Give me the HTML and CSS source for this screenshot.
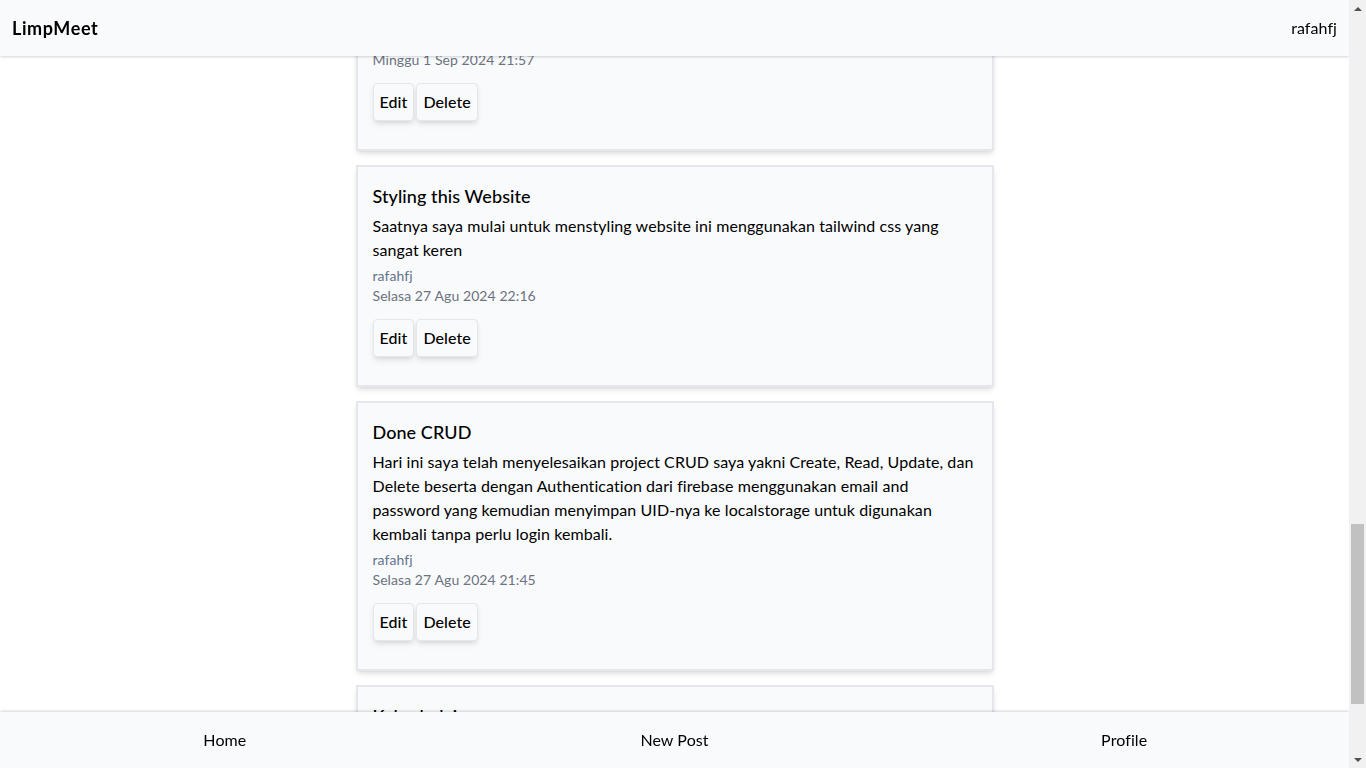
FILE: index.html
```html
<!DOCTYPE html>
<html lang="id">
<head>
<meta charset="utf-8">
<title>LimpMeet</title>
<link rel="stylesheet" href="styles.css">
</head>
<body>
<header class="topbar">
  <div class="brand">LimpMeet</div>
  <div class="user">rafahfj</div>
</header>

<main class="feed">
  <article class="card">
    <h2 class="card-title">Halaman Profile</h2>
    <p class="card-body">Hari ini saya menambahkan halaman profile yang menampilkan semua postingan milik pengguna yang sedang login.</p>
    <div class="card-author">rafahfj</div>
    <div class="card-date">Senin 9 Sep 2024 20:11</div>
    <div class="actions"><button class="btn">Edit</button><button class="btn">Delete</button></div>
  </article>
  <article class="card">
    <h2 class="card-title">Navigasi Bawah</h2>
    <p class="card-body">Menambahkan navigasi di bagian bawah layar agar lebih mudah diakses dari perangkat mobile.</p>
    <div class="card-author">rafahfj</div>
    <div class="card-date">Minggu 8 Sep 2024 19:40</div>
    <div class="actions"><button class="btn">Edit</button><button class="btn">Delete</button></div>
  </article>
  <article class="card">
    <h2 class="card-title">Format Tanggal</h2>
    <p class="card-body">Tanggal postingan sekarang ditampilkan dalam bahasa Indonesia lengkap dengan nama hari, tanggal, bulan, tahun dan jam ketika postingan tersebut dibuat.</p>
    <div class="card-author">rafahfj</div>
    <div class="card-date">Sabtu 7 Sep 2024 10:05</div>
    <div class="actions"><button class="btn">Edit</button><button class="btn">Delete</button></div>
  </article>
  <article class="card">
    <h2 class="card-title">Memperbaiki Bug Login</h2>
    <p class="card-body">Ternyata masih ada bug ketika pengguna logout lalu login kembali dengan akun yang berbeda, UID lama masih tersimpan di localstorage. Sekarang UID dihapus setiap kali pengguna logout sehingga data yang tampil selalu sesuai dengan akun yang sedang login.</p>
    <div class="card-author">rafahfj</div>
    <div class="card-date">Kamis 5 Sep 2024 22:30</div>
    <div class="actions"><button class="btn">Edit</button><button class="btn">Delete</button></div>
  </article>
  <article class="card">
    <h2 class="card-title">Halaman New Post</h2>
    <p class="card-body">Membuat halaman khusus untuk menulis postingan baru dengan judul dan isi.</p>
    <div class="card-author">rafahfj</div>
    <div class="card-date">Rabu 4 Sep 2024 21:12</div>
    <div class="actions"><button class="btn">Edit</button><button class="btn">Delete</button></div>
  </article>
  <article class="card">
    <h2 class="card-title">Konfirmasi Hapus</h2>
    <p class="card-body">Sebelum postingan dihapus sekarang akan muncul konfirmasi terlebih dahulu supaya tidak terhapus secara tidak sengaja oleh pengguna.</p>
    <div class="card-author">rafahfj</div>
    <div class="card-date">Selasa 3 Sep 2024 20:48</div>
    <div class="actions"><button class="btn">Edit</button><button class="btn">Delete</button></div>
  </article>
  <article class="card">
    <h2 class="card-title">Urutan Postingan</h2>
    <p class="card-body">Postingan sekarang diurutkan dari yang paling baru sampai yang paling lama.</p>
    <div class="card-author">rafahfj</div>
    <div class="card-date">Senin 2 Sep 2024 19:15</div>
    <div class="actions"><button class="btn">Edit</button><button class="btn">Delete</button></div>
  </article>
  <article class="card">
    <h2 class="card-title">Nama Website</h2>
    <p class="card-body">Akhirnya saya memberi nama website ini LimpMeet, tempat untuk berbagi catatan harian.</p>
    <div class="card-author">rafahfj</div>
    <div class="card-date">Senin 2 Sep 2024 08:20</div>
    <div class="actions"><button class="btn">Edit</button><button class="btn">Delete</button></div>
  </article>
  <article class="card">
    <h2 class="card-title">Responsive Layout</h2>
    <p class="card-body">Mengatur tampilan supaya tetap rapi ketika dibuka di layar kecil maupun layar besar.</p>
    <div class="card-author">rafahfj</div>
    <div class="card-date">Minggu 1 Sep 2024 21:57</div>
    <div class="actions"><button class="btn">Edit</button><button class="btn">Delete</button></div>
  </article>
  <article class="card" id="anchor">
    <h2 class="card-title">Styling this Website</h2>
    <p class="card-body">Saatnya saya mulai untuk menstyling website ini menggunakan tailwind css yang sangat keren</p>
    <div class="card-author">rafahfj</div>
    <div class="card-date">Selasa 27 Agu 2024 22:16</div>
    <div class="actions"><button class="btn">Edit</button><button class="btn">Delete</button></div>
  </article>
  <article class="card">
    <h2 class="card-title">Done CRUD</h2>
    <p class="card-body">Hari ini saya telah menyelesaikan project CRUD saya yakni Create, Read, Update, dan Delete beserta dengan Authentication dari firebase menggunakan email and password yang kemudian menyimpan UID-nya ke localstorage untuk digunakan kembali tanpa perlu login kembali.</p>
    <div class="card-author">rafahfj</div>
    <div class="card-date">Selasa 27 Agu 2024 21:45</div>
    <div class="actions"><button class="btn">Edit</button><button class="btn">Delete</button></div>
  </article>
  <article class="card">
    <h2 class="card-title">Kelas belajar</h2>
    <p class="card-body">Mulai belajar membuat website dengan React dan Firebase.</p>
    <div class="card-author">rafahfj</div>
    <div class="card-date">Senin 26 Agu 2024 20:00</div>
    <div class="actions"><button class="btn">Edit</button><button class="btn">Delete</button></div>
  </article>
</main>

<nav class="bottombar">
  <a class="nav-link" href="#">Home</a>
  <a class="nav-link" href="#">New Post</a>
  <a class="nav-link" href="#">Profile</a>
</nav>

<div class="scrollbar" aria-hidden="true">
  <div class="sb-btn"><span class="arrow-up"></span></div>
  <div class="sb-track"><div class="sb-thumb"></div></div>
  <div class="sb-btn"><span class="arrow-down"></span></div>
</div>
<script src="script.js"></script>
</body>
</html>
```

FILE: styles.css
```css
* { box-sizing: border-box; }

html {
  scrollbar-width: none;
}
html::-webkit-scrollbar { display: none; }

html, body {
  margin: 0;
  padding: 0;
  background: #ffffff;
  color: #111827;
  font-family: "Lato", "Noto Sans", sans-serif;
  font-size: 16px;
  line-height: 24px;
  letter-spacing: 0.08px;
}

body {
  padding-right: 17px;
}

.topbar {
  position: fixed;
  top: 0;
  left: 0;
  right: 17px;
  height: 56px;
  z-index: 10;
  display: flex;
  align-items: center;
  justify-content: space-between;
  padding: 0 12px;
  background: #f9fafb;
  box-shadow: 0 1px 3px rgba(0,0,0,0.12), 0 1px 2px rgba(0,0,0,0.06);
}

.brand {
  font-size: 18px;
  font-weight: 700;
  letter-spacing: 0.6px;
  color: #000;
}

.user {
  font-size: 16px;
  color: #000;
}

.feed {
  width: 638px;
  margin: 0 auto;
  padding: 72px 0 74px;
  display: flex;
  flex-direction: column;
  gap: 14px;
}

.card {
  background: #f9fafb;
  border: 2px solid #e5e7eb;
  padding: 15px 15px;
  box-shadow: 0 4px 6px -1px rgba(0,0,0,0.1), 0 2px 4px -2px rgba(0,0,0,0.1);
}

.card-title {
  margin: 0 0 4px;
  font-size: 18px;
  line-height: 28px;
  font-weight: 500;
  color: #000;
}

.card-body {
  margin: 0 0 4px;
  font-size: 16px;
  line-height: 24px;
  color: #000;
}

.card-author {
  font-size: 14px;
  line-height: 20px;
  color: #64748b;
}

.card-date {
  font-size: 14px;
  line-height: 20px;
  color: #6b7280;
}

.actions {
  display: flex;
  gap: 2px;
  margin: 13px 0 13px;
}

.btn {
  font-family: inherit;
  font-size: 16px;
  line-height: 24px;
  font-weight: 500;
  letter-spacing: 0.08px;
  color: #000;
  background: #f9fafb;
  border: 1px solid #e5e7eb;
  border-radius: 4px;
  padding: 6px 6px;
  box-shadow: 0 4px 6px -1px rgba(0,0,0,0.1), 0 2px 4px -2px rgba(0,0,0,0.1);
}

.bottombar {
  position: fixed;
  left: 0;
  right: 17px;
  bottom: 0;
  height: 56px;
  z-index: 10;
  display: grid;
  grid-template-columns: 1fr 1fr 1fr;
  align-items: center;
  background: #f9fafb;
  box-shadow: 0 -1px 3px rgba(0,0,0,0.12), 0 -1px 2px rgba(0,0,0,0.06);
}

.nav-link {
  text-align: center;
  font-size: 16px;
  color: #000;
  text-decoration: none;
}

/* window scrollbar, drawn over the right edge */
.scrollbar {
  position: fixed;
  top: 0;
  right: 0;
  bottom: 0;
  width: 17px;
  z-index: 20;
  background: #f1f1f1;
  display: flex;
  flex-direction: column;
}

.sb-btn {
  height: 17px;
  flex: none;
  display: flex;
  align-items: center;
  justify-content: center;
}

.arrow-up {
  width: 0;
  height: 0;
  border-left: 4px solid transparent;
  border-right: 4px solid transparent;
  border-bottom: 4px solid #505050;
}

.arrow-down {
  width: 0;
  height: 0;
  border-left: 4px solid transparent;
  border-right: 4px solid transparent;
  border-top: 4px solid #505050;
}

.sb-track {
  flex: 1;
  position: relative;
}

.sb-thumb {
  position: absolute;
  left: 2px;
  right: 2px;
  top: 507px;
  height: 180px;
  background: #c1c1c1;
}
```

FILE: script.js
```js
(function () {
  function place() {
    var anchor = document.getElementById('anchor');
    if (!anchor) return;
    var top = anchor.getBoundingClientRect().top + window.scrollY;
    window.scrollTo(0, top - 165);
  }
  place();
  window.addEventListener('load', place);
})();
```
